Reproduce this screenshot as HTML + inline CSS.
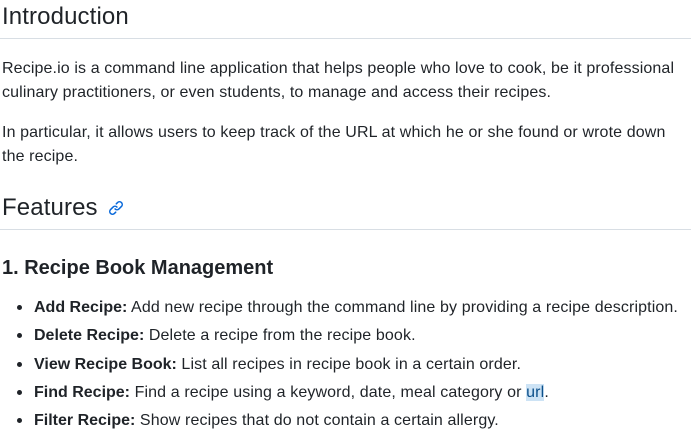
<!DOCTYPE html>
<html><head><style>
body{margin:0;background:#fff;color:#1f2328;font-family:"Liberation Sans",sans-serif;font-size:16px;width:691px;height:443px;overflow:hidden;position:relative;letter-spacing:0.12px}
.a{position:absolute;left:2px;white-space:nowrap}
.hr{position:absolute;left:0;width:691px;height:1px;background:#d8dee4}
b{font-weight:bold;letter-spacing:0}
.li{position:absolute;left:34px;white-space:nowrap}
.dot{position:absolute;left:17px;width:5px;height:5px;border-radius:50%;background:#1f2328}
.u{background:#cde3f5;color:#0b4f8a}
</style></head><body>
<div class="a" style="top:2px;font-size:24px;line-height:30px">Introduction</div>
<div class="hr" style="top:38px"></div>
<div class="a" style="top:57px;line-height:24px">Recipe.io is a command line application that helps people who love to cook, be it professional<br>culinary practitioners, or even students, to manage and access their recipes.</div>
<div class="a" style="top:121px;line-height:24px">In particular, it allows users to keep track of the URL at which he or she found or wrote down<br>the recipe.</div>
<div class="a" style="top:193px;font-size:24px;line-height:30px">Features
<svg width="16" height="16" viewBox="0 0 16 16" style="margin-left:4px;vertical-align:-1px"><path fill="#0969da" d="M7.775 3.275a.75.75 0 0 0 1.06 1.06l1.25-1.25a2 2 0 1 1 2.83 2.83l-2.5 2.5a2 2 0 0 1-2.83 0 .75.75 0 0 0-1.06 1.06 3.5 3.5 0 0 0 4.95 0l2.5-2.5a3.5 3.5 0 0 0-4.95-4.95l-1.25 1.25Zm-4.69 9.64a2 2 0 0 1 0-2.83l2.5-2.5a2 2 0 0 1 2.83 0 .75.75 0 0 0 1.06-1.06 3.5 3.5 0 0 0-4.95 0l-2.5 2.5a3.5 3.5 0 0 0 4.95 4.95l1.25-1.25a.75.75 0 0 0-1.06-1.06l-1.25 1.25a2 2 0 0 1-2.83 0Z"/></svg></div>
<div class="hr" style="top:229px"></div>
<div class="a" style="top:256px;font-size:20px;font-weight:bold;line-height:25px;letter-spacing:0">1. Recipe Book Management</div>
<div class="dot" style="top:305px"></div><div class="li" style="top:299px"><b>Add Recipe:</b> Add new recipe through the command line by providing a recipe description.</div>
<div class="dot" style="top:333px"></div><div class="li" style="top:327px"><b>Delete Recipe:</b> Delete a recipe from the recipe book.</div>
<div class="dot" style="top:362px"></div><div class="li" style="top:356px"><b>View Recipe Book:</b> List all recipes in recipe book in a certain order.</div>
<div class="dot" style="top:390px"></div><div class="li" style="top:384px"><b>Find Recipe:</b> Find a recipe using a keyword, date, meal category or <span class="u">url</span>.</div>
<div class="dot" style="top:418px"></div><div class="li" style="top:412px"><b>Filter Recipe:</b> Show recipes that do not contain a certain allergy.</div>
</body></html>
